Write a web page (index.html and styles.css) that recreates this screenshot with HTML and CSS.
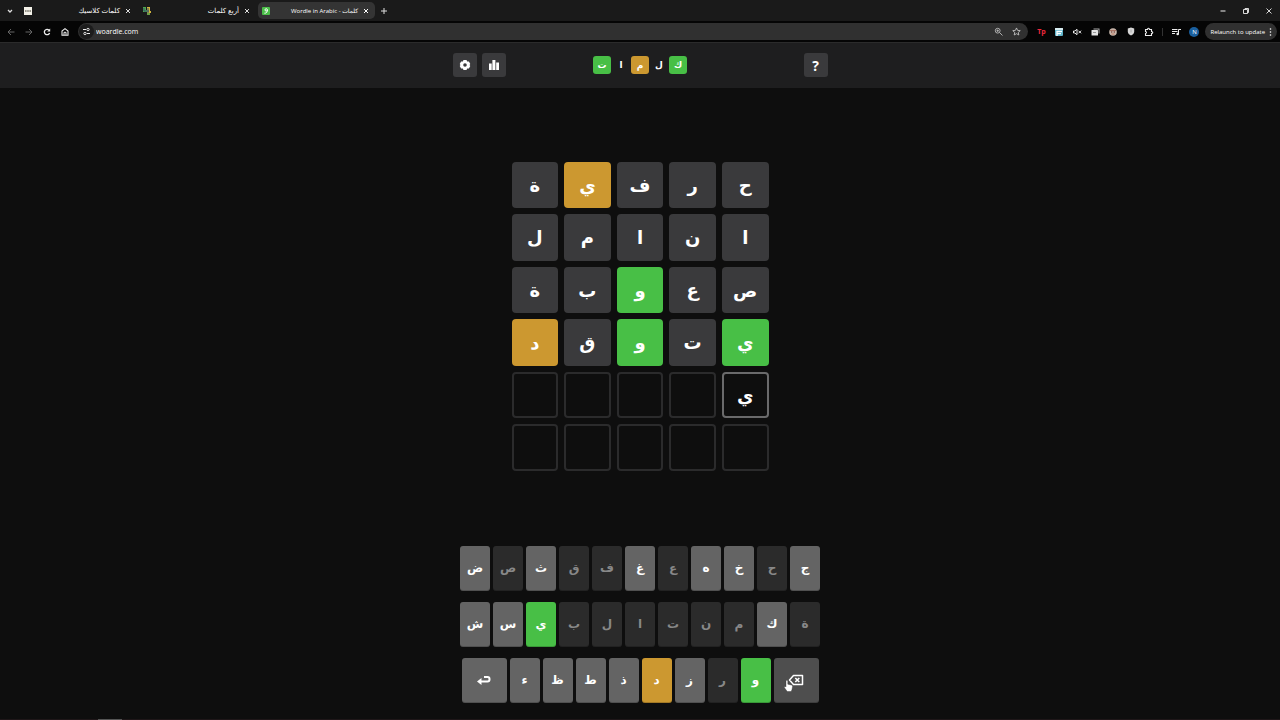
FILE: index.html
```html
<!DOCTYPE html>
<html lang="en">
<head>
  <meta charset="UTF-8">
  <meta name="viewport" content="width=device-width, initial-scale=1.0">
  <title>Wordle in Arabic - كلمات</title>
  <link rel="stylesheet" href="styles.css">
</head>
<body>

  <!-- Browser bar -->
  <div class="browser">
    <div class="tab-strip">
      <button class="icon-btn tab-search" aria-label="Search tabs">
        <svg width="8" height="8" viewBox="0 0 8 8"><path d="M2 3l2 2 2-2" fill="none" stroke="#ddd" stroke-width="1.3"/></svg>
      </button>
      <div class="tab">
        <svg width="8" height="8" viewBox="0 0 8 8"><rect width="8" height="8" fill="#f3f1e8"/><path d="M1 4h6" stroke="#77746a" stroke-width="1.4" stroke-dasharray="1.2 .4"/></svg>
        <span class="tab-title" dir="rtl">كلمات كلاسيك</span>
        <button class="icon-btn tab-close" aria-label="Close tab"><svg width="6" height="6" viewBox="0 0 6 6"><path d="M1 1l4 4M5 1l-4 4" stroke="#ddd"/></svg></button>
      </div>
      <div class="tab">
        <svg width="8" height="8" viewBox="0 0 8 8"><path d="M0 0h3v3h2v2H0z" fill="#4fa64e"/><path d="M4 0h3v4h1v2H4z" fill="#d1b43c"/><path d="M1 1v3h5M5 1v6" fill="none" stroke="#33536b"/><path d="M4 6h3v2H4z" fill="#6c9e45"/></svg>
        <span class="tab-title" dir="rtl">أربع كلمات</span>
        <button class="icon-btn tab-close" aria-label="Close tab"><svg width="6" height="6" viewBox="0 0 6 6"><path d="M1 1l4 4M5 1l-4 4" stroke="#ddd"/></svg></button>
      </div>
      <div class="tab active">
        <svg width="8" height="8" viewBox="0 0 8 8"><rect width="8" height="8" rx="1" fill="#4bbf49"/><circle cx="4.2" cy="2.9" r="1.2" fill="none" stroke="#fff"/><path d="M5.4 3c.1 2-1 3.300-3 3.200" fill="none" stroke="#fff"/></svg>
        <span class="tab-title">Wordle in Arabic - كلمات</span>
        <button class="icon-btn tab-close" aria-label="Close tab"><svg width="6" height="6" viewBox="0 0 6 6"><path d="M1 1l4 4M5 1l-4 4" stroke="#fff"/></svg></button>
      </div>
      <button class="icon-btn new-tab" aria-label="New tab"><svg width="8" height="8" viewBox="0 0 8 8"><path d="M4 1v6M1 4h6" stroke="#ddd"/></svg></button>
      <div class="window-controls">
        <button class="icon-btn" aria-label="Minimize"><svg width="8" height="8" viewBox="0 0 8 8"><path d="M1.5 4h5" stroke="#eee"/></svg></button>
        <button class="icon-btn" aria-label="Restore"><svg width="8" height="8" viewBox="0 0 8 8"><path d="M1.5 2.5h4v4h-4zM3 2.500V1.500h3.500v4h-1" fill="none" stroke="#eee" stroke-width=".9"/></svg></button>
        <button class="icon-btn" aria-label="Close"><svg width="8" height="8" viewBox="0 0 8 8"><path d="M1.500 1.500l5 5M6.500 1.500l-5 5" stroke="#eee" stroke-width=".9"/></svg></button>
      </div>
    </div>

    <div class="toolbar">
      <button class="icon-btn" aria-label="Back"><svg width="10" height="10" viewBox="0 0 10 10"><path d="M8.500 5H2M5 2L2 5l3 3" fill="none" stroke="#666"/></svg></button>
      <button class="icon-btn" aria-label="Forward"><svg width="10" height="10" viewBox="0 0 10 10"><path d="M1.500 5H8M5 2l3 3-3 3" fill="none" stroke="#666"/></svg></button>
      <button class="icon-btn" aria-label="Reload"><svg width="10" height="10" viewBox="0 0 10 10"><path d="M7.600 6A2.700 2.700 0 1 1 7 3.100" fill="none" stroke="#eee" stroke-width="1.300"/><path d="M8.200 1.500v3H5.200z" fill="#eee"/></svg></button>
      <button class="icon-btn" aria-label="Home"><svg width="10" height="10" viewBox="0 0 10 10"><path d="M2 8.200V4l3-2.400L8 4v4.200z" fill="none" stroke="#eee" stroke-width="1.100"/><path d="M4 8V5.300h2V8" fill="none" stroke="#eee"/></svg></button>

      <div class="address-bar">
        <span class="site-info">
          <svg width="9" height="9" viewBox="0 0 9 9"><path d="M4 2.500H1M5 6.500h3" stroke="#eee"/><circle cx="6" cy="2.500" r="1.200" fill="none" stroke="#eee" stroke-width=".9"/><circle cx="3" cy="6.500" r="1.200" fill="none" stroke="#eee" stroke-width=".9"/></svg>
        </span>
        <input type="text" class="url" value="woardle.com" aria-label="Address">
        <button class="icon-btn" aria-label="Zoom"><svg width="9" height="9" viewBox="0 0 9 9"><circle cx="3.700" cy="3.700" r="2.400" fill="none" stroke="#bbb" stroke-width=".9"/><path d="M5.500 5.500l3 3M2.500 3.700h2.400M3.700 2.500v2.400" stroke="#bbb" stroke-width=".9"/></svg></button>
        <button class="icon-btn" aria-label="Bookmark"><svg width="9" height="9" viewBox="0 0 24 24"><path d="M12 2.500l2.900 6.500 7.100.7-5.300 4.700 1.500 7L12 17.800 5.800 21.400l1.500-7L2 9.700 9.100 9z" fill="none" stroke="#ccc" stroke-width="2.200"/></svg></button>
      </div>

      <div class="extensions">
        <button class="icon-btn ext-red">Tp</button>
        <button class="icon-btn" aria-label="Reader"><svg width="8" height="8" viewBox="0 0 8 8"><rect width="8" height="8" rx="1" fill="#5fb4cb"/><path d="M0 1h8M2 8V3.500h5M2 5.700h4" fill="none" stroke="#fff" stroke-width="1.300"/></svg></button>
        <button class="icon-btn" aria-label="Mute"><svg width="9" height="8" viewBox="0 0 9 8"><path d="M.5 3h1.300L4 1.300v5.400L1.800 5H.5z" fill="none" stroke="#eee"/><path d="M5.500 2.700l2.600 2.600M8.100 2.700L5.500 5.300" stroke="#eee"/></svg></button>
        <button class="icon-btn" aria-label="Gallery"><svg width="9" height="8" viewBox="0 0 9 8"><path d="M2.500.5h6v5h-1v-4h-5z" fill="#aaa"/><rect x=".5" y="2" width="6.500" height="5.500" rx=".5" fill="#e6e6e6"/><path d="M2 4.500h3" stroke="#999"/></svg></button>
        <button class="icon-btn" aria-label="Cookies"><svg width="8" height="8" viewBox="0 0 8 8"><circle cx="4" cy="4" r="3.800" fill="#c9b9ad"/><path d="M1 2.500h6" stroke="#a87464" stroke-width="1.200"/><circle cx="2.700" cy="4" r=".7" fill="#73392f"/><circle cx="5.300" cy="4" r=".7" fill="#73392f"/><path d="M2.500 6h3" stroke="#c27a62"/></svg></button>
        <button class="icon-btn" aria-label="Shield"><svg width="8" height="9" viewBox="0 0 8 9"><path d="M4 .5l3.200 1v3c0 2-1.300 3.300-3.200 4-1.900-.7-3.200-2-3.200-4v-3z" fill="#d7d7d7"/><path d="M4 2.500v3" stroke="#aaa"/></svg></button>
        <button class="icon-btn" aria-label="Extensions"><svg width="10" height="10" viewBox="0 0 10 10"><path d="M1.500 2.500h2c0-1.700 2-1.700 2 0h2v2c1.700 0 1.700 2 0 2v2h-6v-2c1.300-.2 1.300-1.800 0-2z" fill="none" stroke="#eee" stroke-width="1.100"/></svg></button>
        <span class="divider"></span>
        <button class="icon-btn" aria-label="Media"><svg width="9" height="8" viewBox="0 0 9 8"><path d="M0 1.500h5.500M0 3.500h5.500M0 5.500h3M6.500 6V1.500H9" fill="none" stroke="#eee"/><circle cx="5.700" cy="6" r="1.300" fill="#eee"/></svg></button>
        <button class="avatar">N</button>
      </div>
      <button class="relaunch">Relaunch to update
        <svg width="3" height="8" viewBox="0 0 3 8"><circle cx="1.500" cy="1" r=".8" fill="#fff"/><circle cx="1.500" cy="4" r=".8" fill="#fff"/><circle cx="1.500" cy="7" r=".8" fill="#fff"/></svg>
      </button>
    </div>
  </div>

  <!-- Game header -->
  <header class="header">
    <div class="header-inner">
      <div class="header-buttons">
        <button class="menu-btn" aria-label="Settings">
          <svg width="12" height="12" viewBox="0 0 12 12"><path d="M4.500 1h3l.7 1.500 1.700-.1L11.300 5l-.8 1 .8 1-1.400 2.600-1.700-.1L7.500 11h-3l-.7-1.500-1.700.1L.7 7l.8-1-.8-1 1.400-2.600 1.700.1z" fill="#fff"/><circle cx="6" cy="6" r="1.800" fill="#3a3a3c"/></svg>
        </button>
        <button class="menu-btn" aria-label="Statistics">
          <svg width="12" height="12" viewBox="0 0 12 12"><path d="M1 4.500h2.700V11H1zM4.400 1h3v10h-3zM8.200 3.500H11V11H8.200z" fill="#fff"/></svg>
        </button>
      </div>
      <div class="logo" dir="rtl">
        <span class="green">ك</span>
        <span>ل</span>
        <span class="orange">م</span>
        <span>ا</span>
        <span class="green">ت</span>
      </div>
      <div class="header-buttons end">
        <button class="menu-btn help" aria-label="Help">?</button>
      </div>
    </div>
  </header>

  <!-- Board -->
  <main class="game">
    <div class="board" dir="rtl">
      <div class="tile gray">ح</div>
      <div class="tile gray">ر</div>
      <div class="tile gray">ف</div>
      <div class="tile orange">ي</div>
      <div class="tile gray">ة</div>

      <div class="tile gray">ا</div>
      <div class="tile gray">ن</div>
      <div class="tile gray">ا</div>
      <div class="tile gray">م</div>
      <div class="tile gray">ل</div>

      <div class="tile gray">ص</div>
      <div class="tile gray">ع</div>
      <div class="tile green">و</div>
      <div class="tile gray">ب</div>
      <div class="tile gray">ة</div>

      <div class="tile green">ي</div>
      <div class="tile gray">ت</div>
      <div class="tile green">و</div>
      <div class="tile gray">ق</div>
      <div class="tile orange">د</div>

      <div class="tile filled">ي</div>
      <div class="tile"></div>
      <div class="tile"></div>
      <div class="tile"></div>
      <div class="tile"></div>

      <div class="tile"></div>
      <div class="tile"></div>
      <div class="tile"></div>
      <div class="tile"></div>
      <div class="tile"></div>
    </div>
  </main>

  <!-- Keyboard -->
  <div class="keyboard">
    <div class="key-row">
      <button class="key">ض</button>
      <button class="key used">ص</button>
      <button class="key">ث</button>
      <button class="key used">ق</button>
      <button class="key used">ف</button>
      <button class="key">غ</button>
      <button class="key used">ع</button>
      <button class="key">ه</button>
      <button class="key">خ</button>
      <button class="key used">ح</button>
      <button class="key">ج</button>
    </div>
    <div class="key-row">
      <button class="key">ش</button>
      <button class="key">س</button>
      <button class="key green">ي</button>
      <button class="key used">ب</button>
      <button class="key used">ل</button>
      <button class="key used">ا</button>
      <button class="key used">ت</button>
      <button class="key used">ن</button>
      <button class="key used">م</button>
      <button class="key">ك</button>
      <button class="key used">ة</button>
    </div>
    <div class="key-row">
      <button class="key wide" aria-label="Enter">
        <svg width="16" height="12" viewBox="0 0 16 12"><path d="M4 7.500h7.500a2 2 0 0 0 2-2v-.500a2 2 0 0 0-2-2H8" fill="none" stroke="#fff" stroke-width="2"/><path d="M1 7.500l4.500-3.500v7z" fill="#fff"/></svg>
      </button>
      <button class="key">ء</button>
      <button class="key">ظ</button>
      <button class="key">ط</button>
      <button class="key">ذ</button>
      <button class="key orange">د</button>
      <button class="key">ز</button>
      <button class="key used">ر</button>
      <button class="key green">و</button>
      <button class="key wide pressed" aria-label="Backspace">
        <svg width="16" height="12" viewBox="0 0 16 12"><path d="M5.500 1.500H14.500v9H5.500L1.500 6z" fill="none" stroke="#fff" stroke-width="1.500" stroke-linejoin="round"/><path d="M7.300 4l4 4M11.300 4l-4 4" stroke="#fff" stroke-width="1.600"/></svg>
        <svg class="pointer" width="9" height="12" viewBox="0 0 9 12"><path d="M2 1.200c0-1.400 1.800-1.400 1.800 0v3l3.700.8c.8.200 1.200.7 1.100 1.500L8 9.500 7.200 11.500H3.200L.5 7.700c-.7-1 .5-1.700 1.500-.7z" fill="#fff" stroke="#333" stroke-width=".4"/></svg>
      </button>
    </div>
  </div>

  <div class="taskbar"><span></span></div>

</body>
</html>
```
FILE: styles.css
```css
* {
  box-sizing: border-box;
}

body {
  margin: 0;
  min-height: 100vh;
  display: flex;
  flex-direction: column;
  background: #0e0e0e;
  color: #fff;
  font-family: 'Open Sans', 'DejaVu Sans', sans-serif;
}

button {
  border: none;
  padding: 0;
  color: inherit;
  font-family: inherit;
  cursor: pointer;
}

svg {
  display: block;
  flex: none;
}

/* Browser bar */
.browser {
  background: #050505;
  border-bottom: 1px solid #2b2b2b;
}

.icon-btn {
  display: flex;
  align-items: center;
  justify-content: center;
  background: none;
}

.tab-strip {
  display: flex;
  align-items: center;
  gap: 2px;
  height: 21px;
  padding: 0 7px 0 6px;
  background: #1a1a1a;
}

.tab-search {
  width: 8px;
  margin-right: 4px;
}

.tab {
  display: flex;
  align-items: center;
  gap: 5px;
  width: 117px;
  height: 17px;
  padding: 0 6px 0 4px;
  border-radius: 5px;
}

.tab.active {
  background: #343434;
}

.tab-title {
  flex: 1;
  font-size: 6px;
  line-height: 12px;
  text-align: right;
  white-space: nowrap;
}

.tab-title[dir="rtl"] {
  font-size: 7px;
}

.new-tab {
  width: 14px;
  height: 16px;
}

.window-controls {
  display: flex;
  gap: 15px;
  margin-left: auto;
}

.toolbar {
  display: flex;
  align-items: center;
  height: 21px;
  padding: 0 3px 0 2px;
}

.toolbar .icon-btn {
  width: 18px;
  height: 16px;
}

.address-bar {
  flex: 1;
  display: flex;
  align-items: center;
  height: 17px;
  margin: 0 4px;
  padding: 0 3px 0 1px;
  border-radius: 9px;
  background: #303030;
}

.site-info {
  display: flex;
  align-items: center;
  justify-content: center;
  width: 15px;
  height: 15px;
  border-radius: 50%;
  background: #1c1c1c;
}

.url {
  flex: 1;
  min-width: 0;
  padding: 0 2px;
  border: none;
  outline: none;
  background: none;
  color: #fff;
  font-family: inherit;
  font-size: 7px;
}

.extensions {
  display: flex;
  align-items: center;
}

.toolbar .ext-red {
  color: #f0283c;
  font-size: 7px;
  font-weight: 700;
}

.divider {
  width: 1px;
  height: 8px;
  margin: 0 4px;
  background: #333;
}

.avatar {
  width: 10px;
  height: 10px;
  margin: 0 6px 0 4px;
  border-radius: 50%;
  background: #1a5f9e;
  font-size: 6px;
  line-height: 10px;
}

.relaunch {
  display: flex;
  align-items: center;
  gap: 4px;
  height: 17px;
  padding: 0 5px;
  border-radius: 9px;
  background: #303030;
  font-size: 6px;
  white-space: nowrap;
}

/* Game header */
.header {
  padding: 10px 0 11px;
  background: #1e1e1f;
}

.header-inner {
  display: flex;
  align-items: center;
  max-width: 375px;
  margin: 0 auto;
}

.header-buttons {
  flex: 1;
  display: flex;
  gap: 5px;
}

.header-buttons.end {
  justify-content: flex-end;
}

.menu-btn {
  display: flex;
  align-items: center;
  justify-content: center;
  width: 24px;
  height: 24px;
  border-radius: 3px;
  background: #3a3a3c;
}

.help {
  font-size: 14px;
  font-weight: 700;
}

.logo {
  display: flex;
  gap: 1px;
}

.logo span {
  width: 18px;
  height: 18px;
  border-radius: 3px;
  font-size: 9px;
  font-weight: 700;
  line-height: 18px;
  text-align: center;
}

/* Board */
.game {
  flex: 1;
  display: flex;
  align-items: center;
  justify-content: center;
  padding-bottom: 2px;
}

.board {
  display: grid;
  grid-template-columns: repeat(5, 1fr);
  grid-template-rows: repeat(6, 1fr);
  gap: 6px;
  width: 257px;
  height: 309px;
}

.tile {
  display: flex;
  align-items: center;
  justify-content: center;
  border: 2px solid #2b2b2c;
  border-radius: 4px;
  font-size: 18px;
  font-weight: 700;
  line-height: 24px;
}

.tile.filled {
  border-color: #6a6a6b;
}

.tile.gray,
.tile.green,
.tile.orange {
  border: none;
}

.gray {
  background: #3a3a3c;
}

.logo .green,
.tile.green,
.key.green {
  background: #48bf46;
}

.logo .orange,
.tile.orange,
.key.orange {
  background: #cc9830;
}

/* Keyboard */
.keyboard {
  display: flex;
  flex-direction: column;
  gap: 11px;
  padding-bottom: 16px;
}

.key-row {
  display: flex;
  justify-content: center;
  gap: 3px;
}

.key {
  display: flex;
  align-items: center;
  justify-content: center;
  width: 30px;
  height: 45px;
  padding-bottom: 3px;
  border-radius: 3px;
  background: #646464;
  box-shadow: inset 0 -1px rgba(0, 0, 0, 0.2);
  font-size: 12px;
  font-weight: 700;
}

.key.used {
  background: #2b2b2b;
  color: #888;
}

.key.wide {
  width: 45px;
  padding-bottom: 1px;
}

.key.pressed {
  position: relative;
  background: #4e4e4e;
}

.pointer {
  position: absolute;
  left: 10px;
  top: 22px;
}

/* Strip along the bottom of the screen */
.taskbar {
  height: 1px;
  background: #1f1719;
}

.taskbar span {
  display: block;
  width: 24px;
  height: 1px;
  margin-left: 98px;
  background: #555;
}
```
